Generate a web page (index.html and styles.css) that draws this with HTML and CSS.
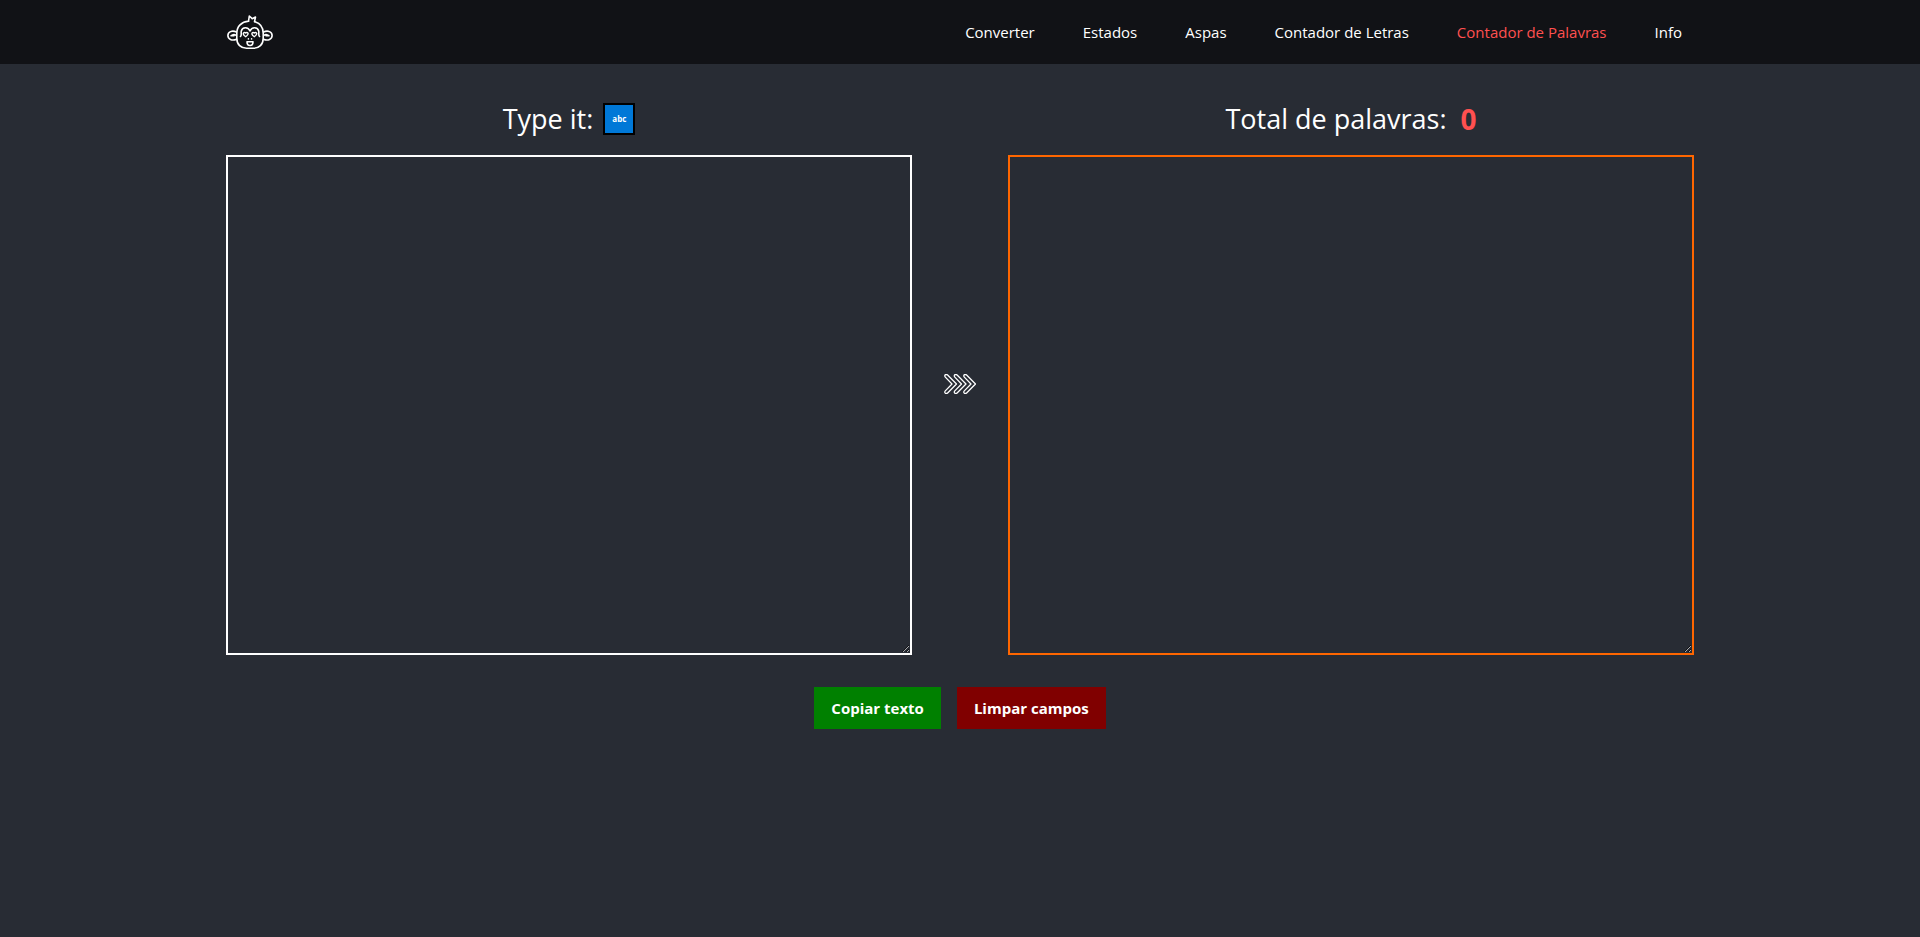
FILE: index.html
```html
<!DOCTYPE html>
<html lang="pt-BR">
<head>
<meta charset="utf-8">
<meta name="viewport" content="width=device-width, initial-scale=1">
<title>Contador de Palavras</title>
<link rel="stylesheet" href="styles.css">
</head>
<body>
<header class="header">
  <div class="container header-inner">
    <a class="logo" href="#" aria-label="Início">
      <svg viewBox="0 0 48 38" width="48" height="38" fill="none" stroke="#fff" stroke-width="1.6" stroke-linejoin="round" stroke-linecap="round">
        <path d="M22.500 8.300l.8-5.300 2.900 2.700 3.300-1.700-1 4.700"/>
        <path d="M22.500 8.300C15.500 8.700 10.800 13.500 10.800 20v5.500c0 6 4.200 9.800 9.700 9.800h7c5.500 0 9.700-3.800 9.700-9.800V20c0-5.500-3.200-9.700-8.200-11.300"/>
        <path d="M10.500 19C6 16.800 1.900 19 1.900 22.500s4 5.800 8.600 3.700M10.200 22.500C8.500 21 6.500 21.500 5 22.800h3"/>
        <path d="M37.500 19c4.500-2.200 8.600 0 8.600 3.500s-4 5.800-8.600 3.700M37.800 22.500c1.700-1.500 3.700-1 5.200.3h-3"/>
        <path d="M14.500 23.500c1.500-1.500.3-3.500.8-5.500 1-4.300 7-4.500 8.700 0 1.700-4.500 7.700-4.300 8.700 0 .5 2-.7 4 .8 5.500"/>
        <path stroke-width="1.400" d="M19.700 20c-1.200-1.200-2.700-.3-2.300 1.200.3 1.200 1.300 1.800 2.300 2.500 1-.7 2-1.300 2.300-2.500.4-1.500-1.100-2.400-2.300-1.200zM28.300 20c-1.200-1.200-2.700-.3-2.300 1.200.3 1.200 1.300 1.800 2.300 2.500 1-.7 2-1.300 2.300-2.500.4-1.500-1.100-2.400-2.300-1.200z"/>
        <path d="M22.400 25.900v.1M25.600 25.900v.1M21 28.800h6c0 2.200-1 3.700-3 3.700s-3-1.500-3-3.700z"/>
      </svg>
    </a>
    <nav class="nav">
      <a class="nav-link" href="#">Converter</a>
      <a class="nav-link" href="#">Estados</a>
      <a class="nav-link" href="#">Aspas</a>
      <a class="nav-link" href="#">Contador de Letras</a>
      <a class="nav-link active" href="#" aria-current="page">Contador de Palavras</a>
      <a class="nav-link" href="#">Info</a>
    </nav>
  </div>
</header>
<main class="container main">
  <div class="fields">
    <section class="field">
      <div class="title"><label for="source">Type it:</label><button class="case-button" type="button">abc</button></div>
      <textarea class="box" id="source"></textarea>
    </section>
    <svg class="arrows" viewBox="0 0 32 20" width="32" height="20" fill="none" stroke="#fff" stroke-width="1.300" stroke-linejoin="round" aria-hidden="true">
      <path id="chevron" d="M.8 1.500C1 .3 2.800.2 3.600 1L12.500 10l-8.900 9c-.8.800-2.600.7-2.800-.5-.1-.8 0-1.100.5-1.600L8 10 1.300 3.100c-.5-.5-.6-.9-.5-1.600z"/>
      <use href="#chevron" x="9.500"/>
      <use href="#chevron" x="19"/>
    </svg>
    <section class="field">
      <div class="title"><label for="result">Total de palavras:</label><output class="total" for="source">0</output></div>
      <textarea class="box box-result" id="result" readonly></textarea>
    </section>
  </div>
  <div class="actions">
    <button class="button copy" type="button">Copiar texto</button>
    <button class="button clear" type="button">Limpar campos</button>
  </div>
</main>
</body>
</html>
```

FILE: styles.css
```css
* {
  box-sizing: border-box;
}

body {
  margin: 0;
  min-height: 100vh;
  background: #282c34;
  color: #fff;
  font: 15px/24px "Segoe UI", "Open Sans", "Noto Sans", sans-serif;
}

.container {
  width: 100%;
  max-width: 1500px;
  margin: 0 auto;
  padding: 0 16px;
}

.header {
  background: #111216;
}

.header-inner {
  display: flex;
  align-items: center;
  justify-content: space-between;
  min-height: 64px;
}

.logo,
.logo svg {
  display: block;
}

.nav {
  display: flex;
  flex-wrap: wrap;
  gap: 48px;
  padding-right: 12px;
}

.nav-link {
  color: #fff;
  text-decoration: none;
}

.nav-link.active {
  color: #ff5050;
}

.main {
  padding-top: 32px;
}

.fields {
  display: grid;
  grid-template-columns: 1fr 32px 1fr;
  column-gap: 32px;
}

.title {
  display: flex;
  align-items: center;
  justify-content: center;
  min-height: 46px;
  margin-bottom: 13px;
  font-size: 27px;
  line-height: 44px;
}

.case-button {
  width: 32px;
  height: 32px;
  margin-left: 10px;
  padding: 0;
  border: 2px solid #000;
  background: #0078d7;
  color: #fff;
  font: bold 8px/28px "Segoe UI", "Open Sans", "Noto Sans", sans-serif;
}

.total {
  margin-left: 14px;
  color: #ff5050;
  font-size: 28px;
  font-weight: bold;
}

.box {
  display: block;
  width: 100%;
  height: 500px;
  padding: 16px;
  border: 2px solid #fff;
  border-radius: 0;
  background: transparent;
  color: #fff;
  font: inherit;
  resize: both;
}

.box-result {
  border-color: #f60;
}

.arrows {
  align-self: center;
  margin-top: 16px;
}

.actions {
  display: flex;
  justify-content: center;
  gap: 16px;
  padding: 32px 0;
}

.button {
  min-height: 42px;
  padding: 0 17px;
  border: 0;
  background: green;
  color: #fff;
  font: bold 15px/24px "Segoe UI", "Open Sans", "Noto Sans", sans-serif;
}

.clear {
  background: maroon;
}
```
